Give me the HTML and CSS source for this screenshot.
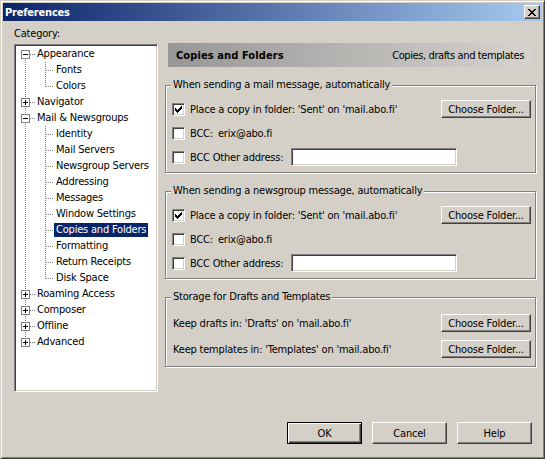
FILE: index.html
```html
<!DOCTYPE html>
<html>
<head>
<meta charset="utf-8">
<title>Preferences</title>
<link rel="stylesheet" href="styles.css">
</head>
<body>
<div class="window">
  <div class="titlebar">
    <span class="title">Preferences</span>
    <span class="close"><svg width="8" height="7" viewBox="0 0 8 7"><path d="M0 0h2v1H0zM6 0h2v1H6zM1 1h2v1H1zM5 1h2v1H5zM2 2h4v1H2zM3 3h2v1H3zM2 4h4v1H2zM1 5h2v1H1zM5 5h2v1H5zM0 6h2v1H0zM6 6h2v1H6z" fill="#000"/></svg></span>
  </div>
  <div class="content">
    <div class="main">
      <div class="left">
        <div class="cat-label">Category:</div>
        <div class="tree">
          <div class="node t0 first"><span class="exp minus"></span><span class="lbl">Appearance</span></div>
          <div class="node t1"><span class="lbl">Fonts</span></div>
          <div class="node t1 last"><span class="lbl">Colors</span></div>
          <div class="node t0"><span class="exp plus"></span><span class="lbl">Navigator</span></div>
          <div class="node t0"><span class="exp minus"></span><span class="lbl">Mail &amp; Newsgroups</span></div>
          <div class="node t1"><span class="lbl">Identity</span></div>
          <div class="node t1"><span class="lbl">Mail Servers</span></div>
          <div class="node t1"><span class="lbl">Newsgroup Servers</span></div>
          <div class="node t1"><span class="lbl">Addressing</span></div>
          <div class="node t1"><span class="lbl">Messages</span></div>
          <div class="node t1"><span class="lbl">Window Settings</span></div>
          <div class="node t1"><span class="lbl sel">Copies and Folders</span></div>
          <div class="node t1"><span class="lbl">Formatting</span></div>
          <div class="node t1"><span class="lbl">Return Receipts</span></div>
          <div class="node t1 last"><span class="lbl">Disk Space</span></div>
          <div class="node t0"><span class="exp plus"></span><span class="lbl">Roaming Access</span></div>
          <div class="node t0"><span class="exp plus"></span><span class="lbl">Composer</span></div>
          <div class="node t0"><span class="exp plus"></span><span class="lbl">Offline</span></div>
          <div class="node t0 last"><span class="exp plus"></span><span class="lbl">Advanced</span></div>
        </div>
      </div>
      <div class="right">
        <div class="header"><span class="h-title">Copies and Folders</span><span class="h-sub">Copies, drafts and templates</span></div>

        <fieldset class="group">
          <legend>When sending a mail message, automatically</legend>
          <div class="row">
            <span class="cb"><svg width="7" height="7" viewBox="0 0 7 7"><path d="M0 2h1v3H0zM1 3h1v3H1zM2 4h1v3H2zM3 3h1v3H3zM4 2h1v3H4zM5 1h1v3H5zM6 0h1v3H6z" fill="#000"/></svg></span>
            <span>Place a copy in folder: 'Sent' on 'mail.abo.fi'</span>
            <button class="btn choose">Choose Folder...</button>
          </div>
          <div class="row">
            <span class="cb"></span><span>BCC:</span><span class="addr">erix@abo.fi</span>
          </div>
          <div class="row">
            <span class="cb"></span><span>BCC Other address:</span><input class="field" type="text">
          </div>
        </fieldset>

        <fieldset class="group">
          <legend>When sending a newsgroup message, automatically</legend>
          <div class="row">
            <span class="cb"><svg width="7" height="7" viewBox="0 0 7 7"><path d="M0 2h1v3H0zM1 3h1v3H1zM2 4h1v3H2zM3 3h1v3H3zM4 2h1v3H4zM5 1h1v3H5zM6 0h1v3H6z" fill="#000"/></svg></span>
            <span>Place a copy in folder: 'Sent' on 'mail.abo.fi'</span>
            <button class="btn choose">Choose Folder...</button>
          </div>
          <div class="row">
            <span class="cb"></span><span>BCC:</span><span class="addr">erix@abo.fi</span>
          </div>
          <div class="row">
            <span class="cb"></span><span>BCC Other address:</span><input class="field" type="text">
          </div>
        </fieldset>

        <fieldset class="group storage">
          <legend>Storage for Drafts and Templates</legend>
          <div class="row tall">
            <span class="plain">Keep drafts in: 'Drafts' on 'mail.abo.fi'</span>
            <button class="btn choose">Choose Folder...</button>
          </div>
          <div class="row tall">
            <span class="plain">Keep templates in: 'Templates' on 'mail.abo.fi'</span>
            <button class="btn choose">Choose Folder...</button>
          </div>
        </fieldset>
      </div>
    </div>
    <div class="footer">
      <button class="btn dlg default">OK</button>
      <button class="btn dlg">Cancel</button>
      <button class="btn dlg">Help</button>
    </div>
  </div>
</div>
</body>
</html>
```
FILE: styles.css
```css
* { box-sizing: border-box; }
html, body { margin: 0; padding: 0; }
body {
  background: #d4d0c8;
  font-family: "DejaVu Sans Condensed", "Liberation Sans", sans-serif;
  font-size: 11px;
  letter-spacing: -0.2px;
  color: #000;
}
.window {
  width: 545px;
  height: 459px;
  border: 1px solid;
  border-color: #d4d0c8 #404040 #404040 #d4d0c8;
  box-shadow: inset 1px 1px #fff, inset -1px -1px #808080;
  padding: 2px;
  display: flex;
  flex-direction: column;
  background: #d4d0c8;
}
.titlebar {
  height: 18px;
  flex: none;
  background: linear-gradient(to right, #0a246a, #a6caf0);
  display: flex;
  align-items: center;
  justify-content: space-between;
  padding: 0 2px;
}
.title { color: #fff; font-weight: bold; font-size: 11px; }
.close {
  width: 16px;
  height: 14px;
  background: #d4d0c8;
  border: 1px solid;
  border-color: #fff #404040 #404040 #fff;
  box-shadow: inset -1px -1px #808080;
  display: flex;
  align-items: center;
  justify-content: center;
}
.close svg { display: block; }
.content {
  flex: 1;
  padding: 6px 5px 0 11px;
  display: flex;
  flex-direction: column;
}
.main { display: flex; gap: 7px; }
.left { width: 144px; flex: none; }
.cat-label { line-height: 14px; margin-bottom: 3px; }
.tree {
  height: 348px;
  background: #fff;
  border: 1px solid;
  border-color: #808080 #fff #fff #808080;
  box-shadow: inset 1px 1px #404040, inset -1px -1px #d4d0c8;
  padding: 1px;
}
.node {
  height: 16px;
  display: flex;
  align-items: center;
  background-repeat: no-repeat;
  white-space: nowrap;
}
.lbl { padding: 0 2px; line-height: 14px; }
.lbl.sel { background: #0a246a; color: #fff; }
.t0 {
  padding-left: 5px;
  background-image:
    repeating-linear-gradient(to bottom, #808080 0 1px, transparent 1px 2px),
    repeating-linear-gradient(to right, #808080 0 1px, transparent 1px 2px);
  background-size: 1px 16px, 5px 1px;
  background-position: 9px 0, 14px 8px;
}
.t0.first { background-size: 1px 8px, 5px 1px; background-position: 9px 8px, 14px 8px; }
.t0.last { background-size: 1px 9px, 5px 1px; background-position: 9px 0, 14px 8px; }
.t0 .lbl { margin-left: 5px; }
.exp {
  width: 9px;
  height: 9px;
  align-self: flex-start;
  margin-top: 4px;
  border: 1px solid #808080;
  background: #fff;
}
.exp.minus { background: linear-gradient(#000, #000) center / 5px 1px no-repeat, #fff; }
.exp.plus {
  background:
    linear-gradient(#000, #000) center / 5px 1px no-repeat,
    linear-gradient(#000, #000) center / 1px 5px no-repeat,
    #fff;
}
.t1 {
  padding-left: 38px;
  background-image:
    repeating-linear-gradient(to bottom, #808080 0 1px, transparent 1px 2px),
    repeating-linear-gradient(to bottom, #808080 0 1px, transparent 1px 2px),
    repeating-linear-gradient(to right, #808080 0 1px, transparent 1px 2px);
  background-size: 1px 16px, 1px 16px, 8px 1px;
  background-position: 9px 0, 29px 0, 30px 8px;
}
.t1.last { background-size: 1px 16px, 1px 9px, 8px 1px; }

.right { width: 372px; flex: none; padding-top: 16px; }
.header {
  height: 24px;
  margin: 0 5px 0 3px;
  background: linear-gradient(to right, #979797, #d6d3ce);
  display: flex;
  align-items: center;
  justify-content: space-between;
  padding: 0 8px 0 8px;
}
.h-title { font-weight: bold; letter-spacing: 0.1px; }
.h-sub { letter-spacing: -0.4px; }
.group {
  width: 371px;
  margin: 11px 0 0 0;
  padding: 5px 4px 3px 6px;
  border: 1px solid #808080;
  box-shadow: inset 1px 1px #fff, 1px 1px #fff;
  min-width: 0;
}
.group legend {
  padding: 0 2px;
  margin-left: -1px;
  line-height: 14px;
  background: #d4d0c8;
}
.storage { padding-top: 6px; padding-bottom: 4px; }
.row { height: 24px; display: flex; align-items: center; white-space: nowrap; }
.row.tall { height: 26px; }
.plain { margin-left: 1px; }
.cb {
  width: 13px;
  height: 13px;
  flex: none;
  margin-right: 5px;
  background: #fff;
  border: 1px solid;
  border-color: #808080 #fff #fff #808080;
  box-shadow: inset 1px 1px #404040, inset -1px -1px #d4d0c8;
  display: flex;
  align-items: center;
  justify-content: center;
}
.cb svg { display: block; }
.addr { margin-left: 5px; }
.field {
  width: 166px;
  height: 18px;
  margin: 0 0 0 8px;
  padding: 0 2px;
  background: #fff;
  border: 1px solid;
  border-color: #808080 #fff #fff #808080;
  box-shadow: inset 1px 1px #404040, inset -1px -1px #d4d0c8;
  font: inherit;
  letter-spacing: inherit;
  outline: none;
}
.btn {
  font: inherit;
  letter-spacing: inherit;
  color: #000;
  background: #d4d0c8;
  border: 1px solid;
  border-color: #fff #404040 #404040 #fff;
  box-shadow: inset -1px -1px #808080;
  padding: 0;
  margin: 0;
  border-radius: 0;
}
.choose { width: 90px; height: 18px; margin-left: auto; }
.footer {
  margin-top: 30px;
  padding-right: 5px;
  display: flex;
  justify-content: flex-end;
  gap: 10px;
}
.dlg { width: 75px; height: 22px; }
.dlg.default {
  border-color: #000;
  box-shadow: inset 1px 1px #fff, inset -1px -1px #404040, inset -2px -2px #808080;
}
```
